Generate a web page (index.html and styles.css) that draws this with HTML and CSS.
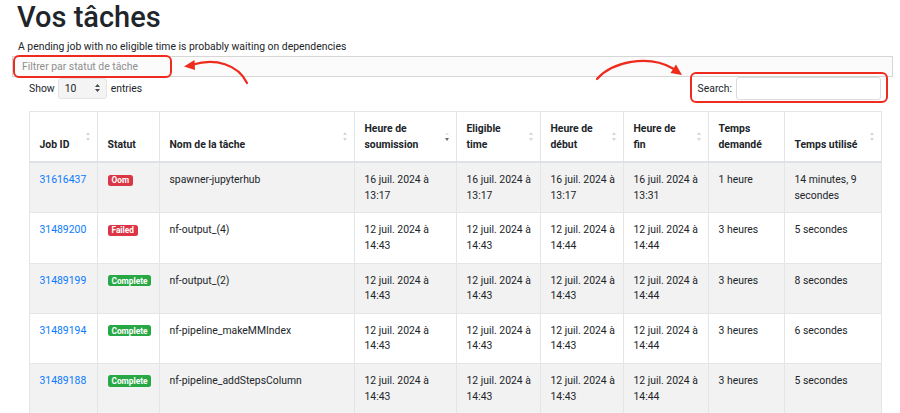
FILE: index.html
```html
<!DOCTYPE html>
<html lang="fr">
<head>
<meta charset="utf-8">
<title>Vos tâches</title>
<link rel="stylesheet" href="styles.css">
</head>
<body>
<div class="page">
  <h1 class="title">Vos tâches</h1>
  <p class="note">A pending job with no eligible time is probably waiting on dependencies</p>
  <div class="filter-wrap">
    <input class="filter" type="text" placeholder="Filtrer par statut de tâche">
    <span class="annot-box annot-filter"></span>
  </div>
  <div class="dt-top">
    <div class="length">
      <span>Show</span>
      <div class="select"><span>10</span><svg width="5" height="8" viewBox="0 0 5 8"><path d="M2.5 0 L5 3 H0Z M2.5 8 L5 5 H0Z" fill="#4a4a4a"/></svg></div>
      <span class="entries">entries</span>
    </div>
    <div class="search">
      <span>Search:</span>
      <input type="search" class="search-input">
      <span class="annot-box annot-search"></span>
    </div>
  </div>
  <table class="jobs">
    <colgroup>
      <col style="width:68px"><col style="width:62px"><col style="width:195px"><col style="width:102px"><col style="width:84px"><col style="width:83px"><col style="width:85px"><col style="width:76px"><col style="width:97px">
    </colgroup>
    <thead>
      <tr>
        <th class="sort">Job ID</th>
        <th>Statut</th>
        <th class="sort">Nom de la tâche</th>
        <th class="sort desc">Heure de<br>soumission</th>
        <th class="sort">Eligible<br>time</th>
        <th class="sort">Heure de<br>début</th>
        <th class="sort">Heure de<br>fin</th>
        <th>Temps<br>demandé</th>
        <th class="sort">Temps utilisé</th>
      </tr>
    </thead>
    <tbody>
      <tr>
        <td><a href="#">31616437</a></td>
        <td><span class="badge red">Oom</span></td>
        <td>spawner-jupyterhub</td>
        <td>16 juil. 2024 à<br>13:17</td>
        <td>16 juil. 2024 à<br>13:17</td>
        <td>16 juil. 2024 à<br>13:17</td>
        <td>16 juil. 2024 à<br>13:31</td>
        <td>1 heure</td>
        <td>14 minutes, 9 secondes</td>
      </tr>
      <tr>
        <td><a href="#">31489200</a></td>
        <td><span class="badge red">Failed</span></td>
        <td>nf-output_(4)</td>
        <td>12 juil. 2024 à<br>14:43</td>
        <td>12 juil. 2024 à<br>14:43</td>
        <td>12 juil. 2024 à<br>14:44</td>
        <td>12 juil. 2024 à<br>14:44</td>
        <td>3 heures</td>
        <td>5 secondes</td>
      </tr>
      <tr>
        <td><a href="#">31489199</a></td>
        <td><span class="badge green">Complete</span></td>
        <td>nf-output_(2)</td>
        <td>12 juil. 2024 à<br>14:43</td>
        <td>12 juil. 2024 à<br>14:43</td>
        <td>12 juil. 2024 à<br>14:43</td>
        <td>12 juil. 2024 à<br>14:44</td>
        <td>3 heures</td>
        <td>8 secondes</td>
      </tr>
      <tr>
        <td><a href="#">31489194</a></td>
        <td><span class="badge green">Complete</span></td>
        <td>nf-pipeline_makeMMIndex</td>
        <td>12 juil. 2024 à<br>14:43</td>
        <td>12 juil. 2024 à<br>14:43</td>
        <td>12 juil. 2024 à<br>14:43</td>
        <td>12 juil. 2024 à<br>14:44</td>
        <td>3 heures</td>
        <td>6 secondes</td>
      </tr>
      <tr>
        <td><a href="#">31489188</a></td>
        <td><span class="badge green">Complete</span></td>
        <td>nf-pipeline_addStepsColumn</td>
        <td>12 juil. 2024 à<br>14:43</td>
        <td>12 juil. 2024 à<br>14:43</td>
        <td>12 juil. 2024 à<br>14:43</td>
        <td>12 juil. 2024 à<br>14:44</td>
        <td>3 heures</td>
        <td>5 secondes</td>
      </tr>
    </tbody>
  </table>
  <svg class="arrows" width="900" height="413" viewBox="0 0 900 413">
    <path d="M247,83 C238,64 215,58 193,64.5" fill="none" stroke="#ee2b1c" stroke-width="2.2" stroke-linecap="round"/>
    <polygon points="184,66.5 194.5,60 195,70" fill="#ee2b1c"/>
    <path d="M597,79 C612,62 648,54 673,68.5" fill="none" stroke="#ee2b1c" stroke-width="2.2" stroke-linecap="round"/>
    <polygon points="682,75 670.5,73 676,64.5" fill="#ee2b1c"/>
  </svg>
</div>
</body>
</html>
```
FILE: styles.css
```css
* { box-sizing: border-box; }

body {
  margin: 0;
  font-family: Roboto, "Liberation Sans", Arial, sans-serif;
  font-size: 10.4px;
  line-height: 1.5;
  color: #212529;
  background: #fff;
}

.page {
  position: relative;
  width: 900px;
  height: 413px;
  overflow: hidden;
}

.title {
  margin: 0;
  padding-left: 17px;
  font-size: 29px;
  font-weight: 500;
  line-height: 1.2;
}

.note {
  margin: 4.5px 0 0 18px;
}

.filter-wrap {
  position: relative;
  margin: 1px 7px 0 12px;
}

.filter {
  display: block;
  width: 100%;
  height: 21px;
  padding: 0 9px;
  border: 1px solid #d6d6d6;
  background: #fbfbfb;
  font: inherit;
  color: #212529;
  outline: none;
}

.filter::placeholder { color: #8f8f8f; }

.annot-box {
  position: absolute;
  border: 2px solid #ee2b1c;
  border-radius: 6px;
  pointer-events: none;
}

.annot-filter {
  left: 1px;
  top: -1px;
  width: 159px;
  height: 23px;
}

.dt-top {
  display: flex;
  justify-content: space-between;
  align-items: center;
  margin: 0 19px 0 29px;
}

.length {
  display: flex;
  align-items: center;
  gap: 3px;
}

.entries { margin-left: 1px; }

.select {
  width: 49px;
  height: 21px;
  display: flex;
  align-items: center;
  justify-content: space-between;
  padding: 0 6px 0 6px;
  background: #f4f4f4;
  border: 1px solid #e4e4e4;
  border-radius: 3px;
}

.search {
  position: relative;
  display: flex;
  align-items: center;
  gap: 4px;
}

.search-input {
  width: 145px;
  height: 23px;
  border: 1px solid #dcdcdc;
  border-radius: 3px;
  background: #fff;
  outline: none;
}

.annot-search {
  left: -8px;
  right: -7px;
  top: -5px;
  bottom: -3px;
}

.jobs {
  margin: 11px 19px 0 29px;
  width: 852px;
  border-collapse: collapse;
  table-layout: fixed;
}

.jobs th,
.jobs td {
  border: 1px solid #e3e6e9;
  padding: 9px 8px 9px 9.5px;
  text-align: left;
  vertical-align: top;
}

.jobs th {
  position: relative;
  vertical-align: bottom;
  font-weight: 700;
  white-space: nowrap;
  border-bottom: 2px solid #dee2e6;
}

.jobs tbody tr:nth-child(odd) { background: #f2f2f2; }

.jobs a {
  color: #0a7bff;
  text-decoration: none;
}

.sort::before,
.sort::after {
  content: "";
  position: absolute;
  right: 7.5px;
  width: 0;
  height: 0;
  border-left: 2.5px solid transparent;
  border-right: 2.5px solid transparent;
}

.sort::before {
  top: calc(50% - 5px);
  border-bottom: 3.5px solid #d7d7d7;
}

.sort::after {
  top: calc(50% + 1px);
  border-top: 3.5px solid #d7d7d7;
}

.sort.desc::before { border-bottom-color: #e4e4e4; }
.sort.desc::after { border-top-color: #6b6b6b; }

.badge {
  display: inline-block;
  font-size: 8.3px;
  font-weight: 700;
  line-height: 1;
  padding: 1.6px 4px 1.4px;
  border-radius: 2.5px;
  color: #fff;
  vertical-align: 0;
}

.badge.red { background: #dc3545; }
.badge.green { background: #28a745; }

.arrows {
  position: absolute;
  left: 0;
  top: 0;
  pointer-events: none;
}
```
